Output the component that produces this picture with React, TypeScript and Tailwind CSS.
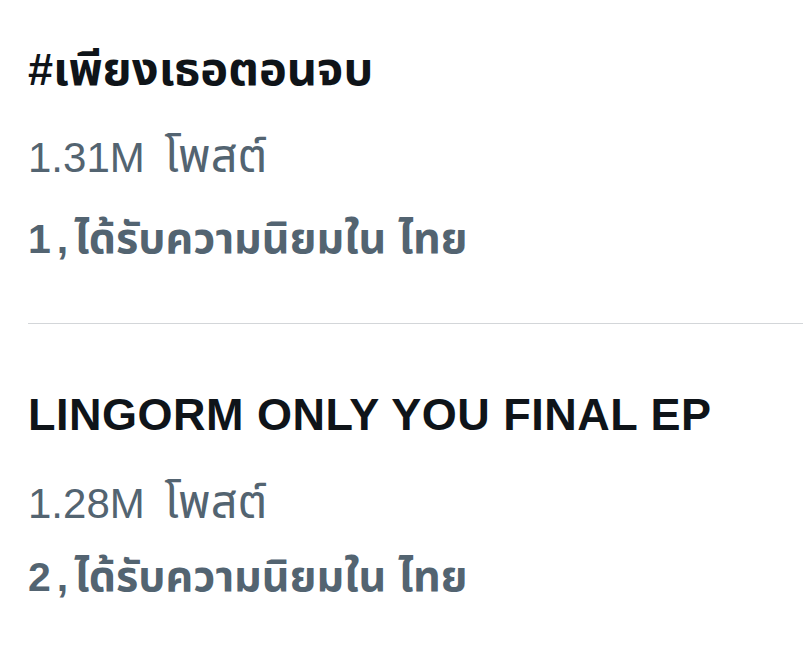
export default function App() {
  const font = { fontFamily: '"Liberation Sans", "Noto Sans Thai", "Noto Sans", sans-serif' };
  return (
    <div className="w-[803px] h-[649px] bg-white overflow-hidden" style={font}>
      <div className="pl-[28px] pt-[44px]">
        <div className="h-[50px] leading-[50px] text-[45px] font-bold text-[#0f1419] whitespace-nowrap">
          #<span className="text-[47px]">เพียงเธอตอนจบ</span>
        </div>
        <div className="mt-[37px] h-[50px] leading-[50px] text-[42px] text-[#536471] whitespace-nowrap">
          1.31M <span className="ml-[8px] text-[47px]">โพสต์</span>
        </div>
        <div className="mt-[32px] h-[50px] leading-[50px] text-[41px] font-bold text-[#536471] whitespace-nowrap">
          1<span className="ml-[6px]">,</span><span className="ml-[6px] text-[43px]">ได้รับความนิยมใน ไทย</span>
        </div>
        <div className="mt-[60px] h-px bg-[#d3d6d9]" />
        <div className="mt-[66px] h-[50px] leading-[50px] text-[45px] font-bold text-[#0f1419] whitespace-nowrap tracking-[0.5px]">
          LINGORM ONLY YOU FINAL EP
        </div>
        <div className="mt-[37px] h-[50px] leading-[50px] text-[42px] text-[#536471] whitespace-nowrap">
          1.28M <span className="ml-[8px] text-[47px]">โพสต์</span>
        </div>
        <div className="mt-[24px] h-[50px] leading-[50px] text-[41px] font-bold text-[#536471] whitespace-nowrap">
          2<span className="ml-[6px]">,</span><span className="ml-[6px] text-[43px]">ได้รับความนิยมใน ไทย</span>
        </div>
      </div>
    </div>
  );
}
